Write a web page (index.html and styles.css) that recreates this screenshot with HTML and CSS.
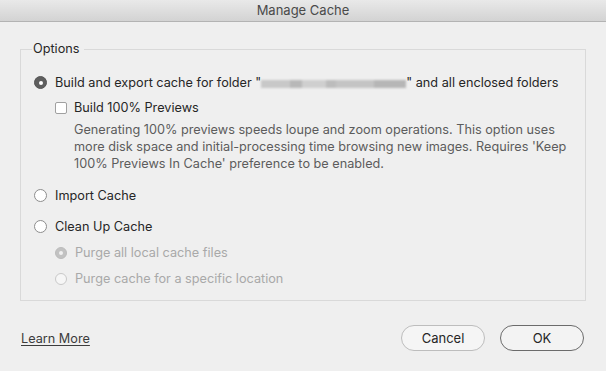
FILE: index.html
```html
<!DOCTYPE html>
<html>
<head>
<meta charset="utf-8">
<link rel="stylesheet" href="styles.css">
</head>
<body>
<div class="dialog">
  <div class="titlebar">Manage Cache</div>
  <fieldset class="group">
    <legend class="legend">Options</legend>
    <div class="row row-build">
      <span class="radio checked"></span>
      <span class="label">Build and export cache for folder "<span class="blur"></span>" and all enclosed folders</span>
    </div>
    <div class="sub">
      <div class="row row-check">
        <span class="checkbox"></span>
        <span class="label">Build 100% Previews</span>
      </div>
      <p class="desc">Generating 100% previews speeds loupe and zoom operations. This option uses<br>more disk space and initial-processing time browsing new images. Requires 'Keep<br>100% Previews In Cache' preference to be enabled.</p>
    </div>
    <div class="row row-import">
      <span class="radio"></span>
      <span class="label">Import Cache</span>
    </div>
    <div class="row row-clean">
      <span class="radio"></span>
      <span class="label">Clean Up Cache</span>
    </div>
    <div class="sub disabled">
      <div class="row row-purge1">
        <span class="radio checked small"></span>
        <span class="label">Purge all local cache files</span>
      </div>
      <div class="row row-purge2">
        <span class="radio small"></span>
        <span class="label">Purge cache for a specific location</span>
      </div>
    </div>
  </fieldset>
  <div class="footer">
    <a class="learn" href="#">Learn More</a>
    <div class="buttons">
      <button class="btn">Cancel</button>
      <button class="btn primary">OK</button>
    </div>
  </div>
</div>
</body>
</html>
```
FILE: styles.css
```css
* { box-sizing: border-box; }
html, body { margin: 0; padding: 0; }
body {
  width: 606px;
  height: 371px;
  background: #efefef;
  font-family: Inter, "Liberation Sans", sans-serif;
  font-size: 12.7px;
  color: #262626;
  overflow: hidden;
}
.dialog { display: flex; flex-direction: column; height: 371px; }
.titlebar {
  height: 22px;
  background: linear-gradient(#e9e9e9, #d3d3d3);
  border-bottom: 1px solid #b3b3b3;
  text-align: center;
  line-height: 21px;
  color: #4a4a4a;
  font-size: 13px;
}
.group {
  margin: 19px 20px 0 20px;
  padding: 0 0 0 13px;
  border: 1px solid #d9d9d9;
  height: 260px;
  min-width: 0;
}
.legend {
  margin-left: -2px;
  padding: 0 4px 0 1px;
  line-height: 16px;
  color: #262626;
}
.row { display: flex; align-items: center; height: 17px; line-height: 17px; white-space: nowrap; }
.row-build { margin-top: 17px; }
.label { margin-left: 8px; }
.sub { padding-left: 21px; }
.row-check { margin-top: 8px; }
.row-check .label { margin-left: 7px; }
.desc {
  margin: 5px 0 0 19px;
  line-height: 17px;
  color: #5c5c5c;
  white-space: nowrap;
}
.row-import { margin-top: 15px; }
.row-clean { margin-top: 14px; }
.row-purge1 { margin-top: 9px; }
.row-purge2 { margin-top: 9px; }
.disabled { color: #a9a9a9; }
.disabled .label { margin-left: 8px; }

.radio {
  width: 13px; height: 13px;
  border-radius: 50%;
  border: 1px solid #8d8d8d;
  background: #fff;
  flex: none;
  position: relative;
}
.radio.checked {
  background: #5e5e5e;
  border-color: #555;
}
.radio.checked::after {
  content: "";
  position: absolute;
  left: 3.5px; top: 3.5px;
  width: 4px; height: 4px;
  border-radius: 50%;
  background: #fff;
}
.disabled .radio { border-color: #c9c9c9; background: #f6f6f6; width: 12px; height: 12px; }
.disabled .radio.checked { background: #c2c2c2; border-color: #bcbcbc; }
.disabled .radio.checked::after { left: 3px; top: 3px; background: #f0f0f0; }

.checkbox {
  width: 12px; height: 12px;
  border: 1px solid #a0a0a0;
  border-radius: 2px;
  background: #fff;
  flex: none;
}
.blur {
  display: inline-block;
  width: 145px;
  height: 8px;
  vertical-align: -1px;
  background: linear-gradient(90deg, #c8c8c8 0 20%, #b8b8b8 20% 28%, #cfcfcf 28% 45%, #bcbcbc 45% 52%, #c4c4c4 52% 78%, #b6b6b6 78% 100%);
  filter: blur(1.2px);
}
.footer {
  display: flex;
  align-items: center;
  justify-content: space-between;
  padding: 24px 22px 0 21px;
}
.learn {
  color: #3c3c3c;
  text-decoration: underline;
  text-underline-offset: 2px;
}
.buttons { display: flex; gap: 15px; }
.btn {
  width: 84px;
  height: 26px;
  border-radius: 13px;
  border: 1px solid #bdbdbd;
  background: #f5f5f5;
  font: inherit;
  font-size: 13px;
  color: #262626;
  padding: 0;
}
.btn.primary { border-color: #6b6b6b; background: #f3f3f3; }
```
